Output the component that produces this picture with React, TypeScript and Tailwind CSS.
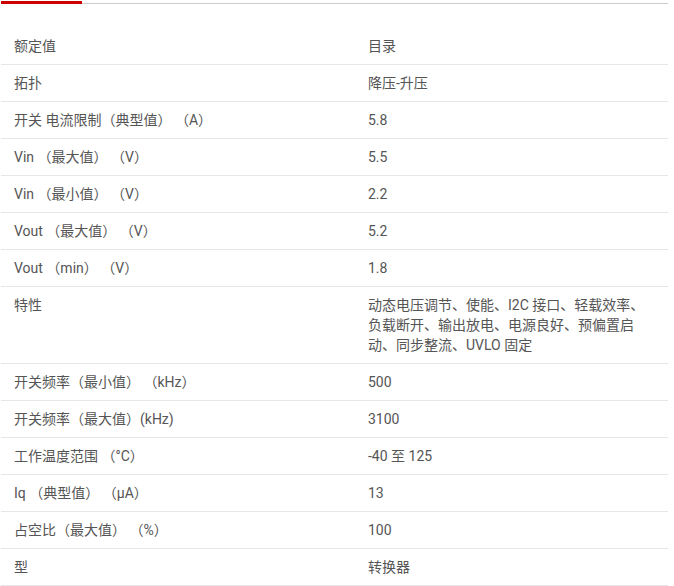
const rows: { label: string; value: string }[] = [
  { label: '拓扑', value: '降压-升压' },
  { label: '开关 电流限制（典型值） （A）', value: '5.8' },
  { label: 'Vin （最大值） （V）', value: '5.5' },
  { label: 'Vin （最小值） （V）', value: '2.2' },
  { label: 'Vout （最大值） （V）', value: '5.2' },
  { label: 'Vout （min） （V）', value: '1.8' },
  {
    label: '特性',
    value: '动态电压调节、使能、I2C 接口、轻载效率、负载断开、输出放电、电源良好、预偏置启动、同步整流、UVLO 固定',
  },
  { label: '开关频率（最小值） （kHz）', value: '500' },
  { label: '开关频率（最大值）(kHz)', value: '3100' },
  { label: '工作温度范围 （°C）', value: '-40 至 125' },
  { label: 'Iq （典型值） （µA）', value: '13' },
  { label: '占空比（最大值） （%）', value: '100' },
  { label: '型', value: '转换器' },
];

export default function App() {
  return (
    <div className="min-h-[586px] bg-white pt-px font-['Roboto','Noto_Sans_CJK_SC',sans-serif] text-[14px] leading-[20px] text-[#555]">
      <div className="ml-px w-[667px]">
        {/* Tab strip */}
        <div className="flex items-end">
          <div className="h-[3px] w-[81px] bg-[#cc0000]" />
          <div className="h-px flex-1 bg-[#cccccc]" />
        </div>

        {/* Parametrics table */}
        <div className="mt-6">
          <div className="grid grid-cols-[354px_313px] border-b border-[#e6e6e6]">
            <div className="py-2 pl-[13px]">额定值</div>
            <div className="py-2 px-[13px]">目录</div>
          </div>
          {rows.map(row => (
            <div key={row.label} className="grid grid-cols-[354px_313px] border-b border-[#e6e6e6]">
              <div className="py-2 pl-[13px] whitespace-pre">{row.label}</div>
              <div className="py-2 px-[13px]">{row.value}</div>
            </div>
          ))}
        </div>
      </div>
    </div>
  );
}
